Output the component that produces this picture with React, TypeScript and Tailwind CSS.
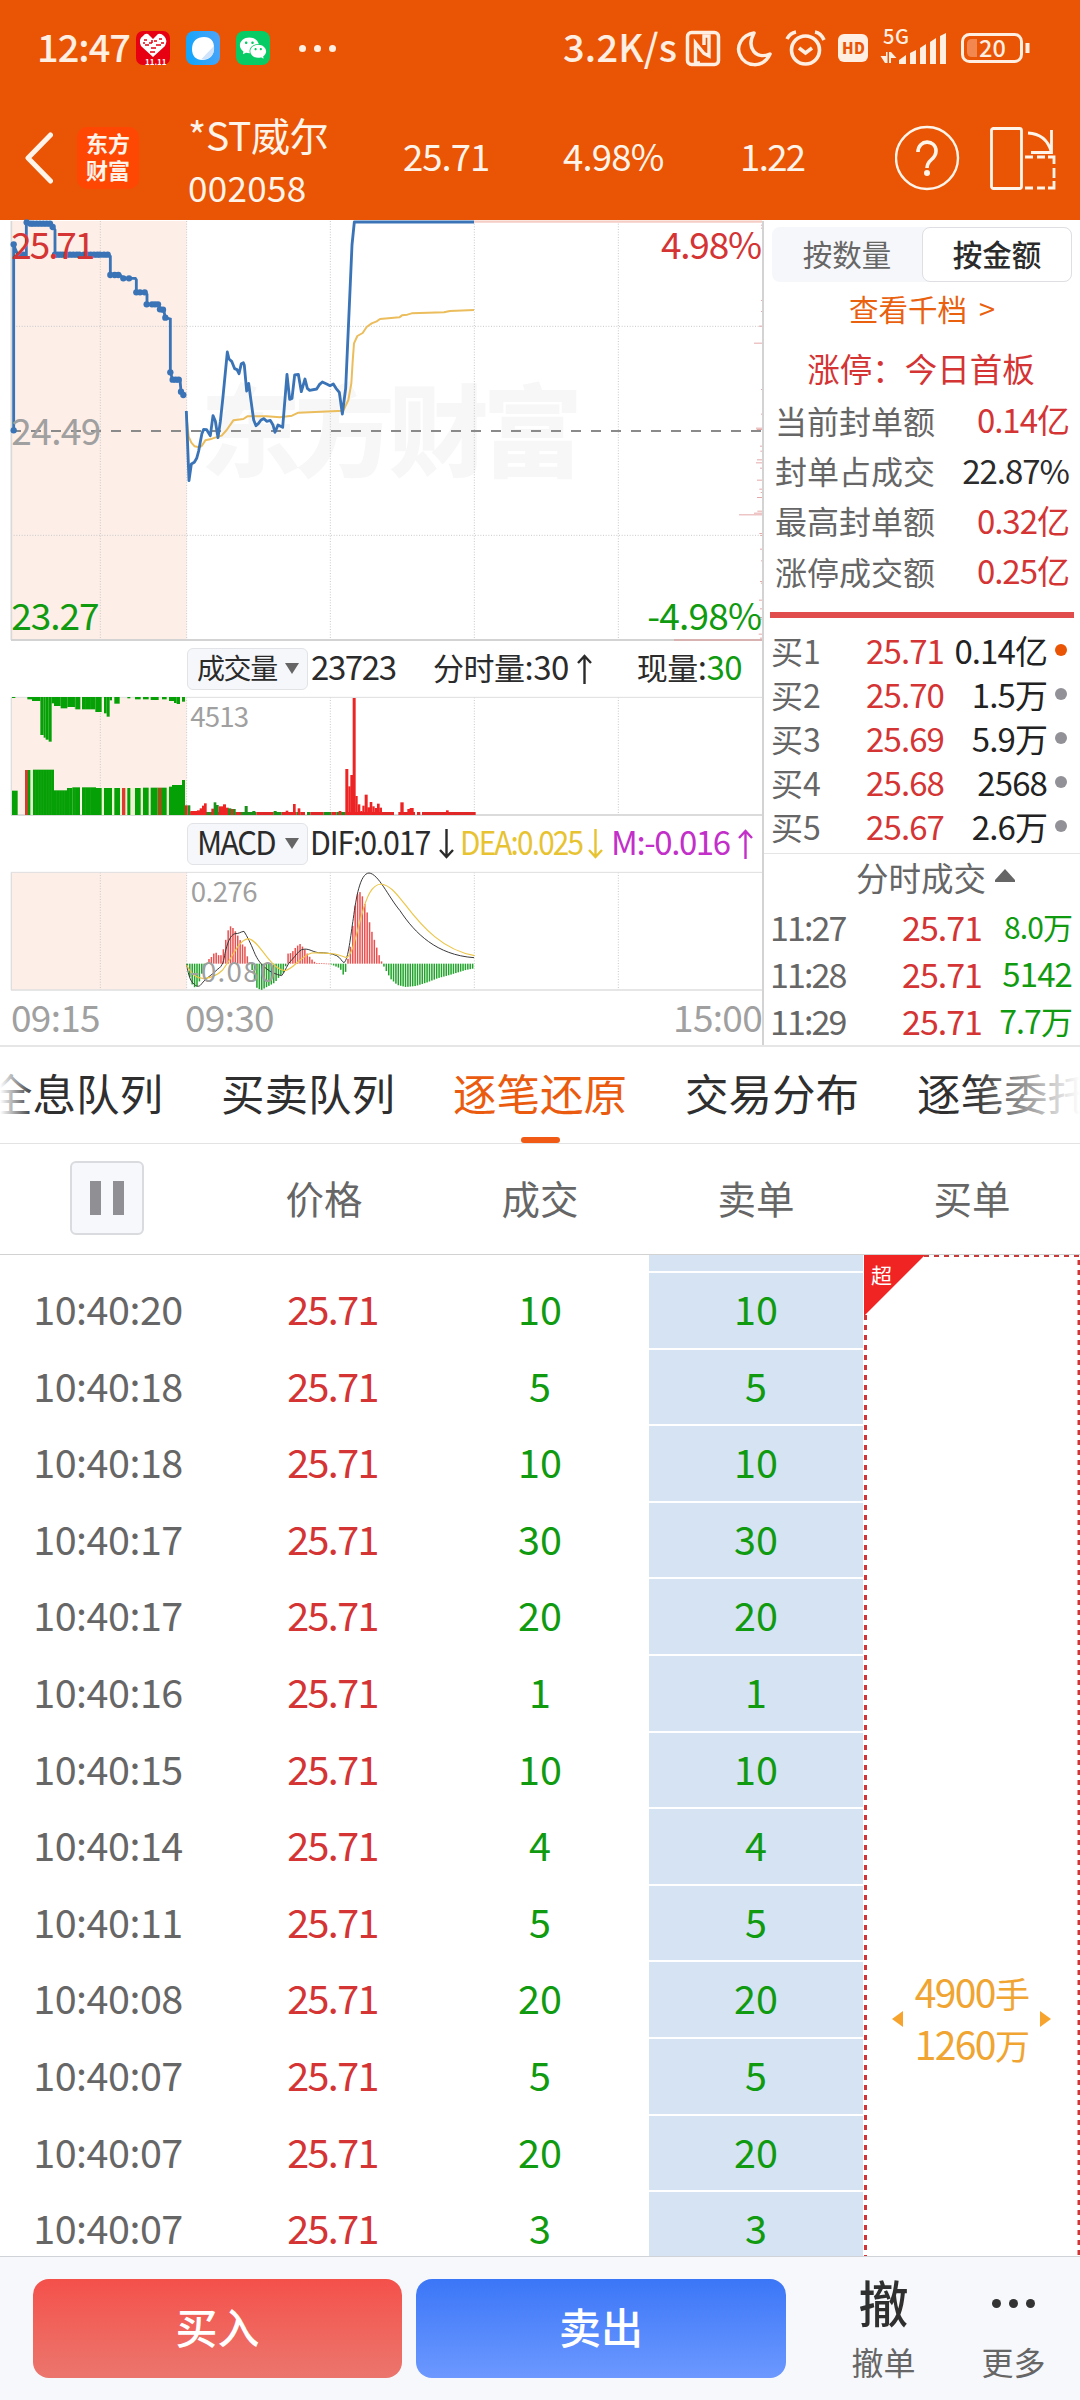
import { AiFillWechat } from 'react-icons/ai';

const hours = ['09:15', '09:30', '15:00'];

const sealStats = [
  { label: '当前封单额', value: '0.14亿', color: 'text-[#d43434]' },
  { label: '封单占成交', value: '22.87%', color: 'text-[#2b2b2b]' },
  { label: '最高封单额', value: '0.32亿', color: 'text-[#d43434]' },
  { label: '涨停成交额', value: '0.25亿', color: 'text-[#d43434]' },
];

const bids = [
  { label: '买1', price: '25.71', volume: '0.14亿', dot: 'bg-[#e95504]' },
  { label: '买2', price: '25.70', volume: '1.5万', dot: 'bg-[#929197]' },
  { label: '买3', price: '25.69', volume: '5.9万', dot: 'bg-[#929197]' },
  { label: '买4', price: '25.68', volume: '2568', dot: 'bg-[#929197]' },
  { label: '买5', price: '25.67', volume: '2.6万', dot: 'bg-[#929197]' },
];

const minuteTrades = [
  { time: '11:27', price: '25.71', volume: '8.0万', size: 'text-[30px]' },
  { time: '11:28', price: '25.71', volume: '5142', size: 'text-[33px]' },
  { time: '11:29', price: '25.71', volume: '7.7万', size: 'text-[32px]' },
];

const tabs = ['全息队列', '买卖队列', '逐笔还原', '交易分布', '逐笔委托'];

const ticks = [
  { time: '10:40:20', volume: 10 },
  { time: '10:40:18', volume: 5 },
  { time: '10:40:18', volume: 10 },
  { time: '10:40:17', volume: 30 },
  { time: '10:40:17', volume: 20 },
  { time: '10:40:16', volume: 1 },
  { time: '10:40:15', volume: 10 },
  { time: '10:40:14', volume: 4 },
  { time: '10:40:11', volume: 5 },
  { time: '10:40:08', volume: 20 },
  { time: '10:40:07', volume: 5 },
  { time: '10:40:07', volume: 20 },
  { time: '10:40:07', volume: 3 },
];

// The charts use a unit of a third of a pixel, so all of them are 2289 wide.
const gridX = [301, 560, 991, 1423, 1855];

const auctionLine =
  'M41 648V88L45 100L53 119H79V25H150L158 36L165 45V119H326L331 124V180H360L370 190H406L409 195V232H434L441 238V268H474L482 283L492 290L496 308L511 312V472L518 494H540L543 530L550 540';
const auctionDots = [
  [41, 88], [41, 646], [60, 119], [70, 119], [80, 22], [92, 26], [100, 26], [110, 26], [120, 26], [130, 26], [140, 26], [150, 26], [158, 36],
  [165, 119], [173, 119], [181, 119], [189, 119], [200, 119], [210, 119], [220, 119], [230, 119], [238, 119], [252, 119],
  [262, 119], [272, 119], [282, 119], [292, 119], [300, 119], [312, 119], [323, 119], [331, 180], [344, 180], [355, 180],
  [370, 190], [387, 190], [409, 232], [420, 232], [434, 232], [440, 268], [456, 268], [465, 268], [474, 268], [480, 283],
  [489, 284], [496, 308], [511, 472], [518, 494], [527, 494], [536, 494], [543, 530], [550, 540],
];
const priceLine =
  'M559 588L567 797L574 747L583 742L590 730L596 708L601 680L606 655L611 643L620 644L631 662L639 602L646 618L654 668L661 620L669 545L682 411L687 432L695 439L704 461L711 464L717 476L724 446L730 443L733 451L740 528L746 505L752 550L761 615L768 632L775 626L783 615L792 611L800 619L811 616L819 630L825 652L834 630L848 637L861 478L869 553L876 550L884 480L895 478L904 530L915 492L922 520L929 526L950 522L958 509L967 501L980 507L990 512L1000 507L1008 520L1018 532L1027 597L1037 520L1049 250L1056 90L1063 21H1422';
const averageLine =
  'M559 600L566 665L574 683L584 694L597 697L605 693L616 676L630 673L645 668L665 662L680 645L700 616L730 612L742 604L800 604L840 607L876 602L895 593L1030 587L1045 555L1054 505L1058 440L1062 385L1072 363L1088 354L1100 336L1115 325L1130 319L1140 312L1198 307L1206 301L1222 299L1235 295L1332 292L1350 288L1422 285';

// y, length of the volume-by-price ticks on the right edge
const priceTicks = [
  [31, 3], [40, 3], [257, 3], [290, 3], [334, 9], [385, 24], [524, 3], [598, 3], [640, 18], [644, 16], [694, 6], [709, 5], [735, 15],
  [744, 18], [760, 6], [796, 15], [823, 8], [833, 4], [848, 15], [889, 14], [895, 24], [900, 69], [956, 8], [962, 5],
  [1003, 6], [1038, 3], [1100, 6], [1105, 3], [1156, 9], [1182, 6], [1208, 8], [1213, 4], [1258, 10], [1270, 6],
];

// x, width, top
const auctionBars = [
  [36, 17, 467], [84, 7, 405], [99, 63, 404], [162, 39, 466], [201, 16, 459], [217, 23, 457], [246, 42, 457], [288, 17, 459],
  [312, 24, 459], [343, 17, 459], [382, 9, 459], [405, 17, 459], [429, 17, 458], [452, 21, 458], [486, 14, 458],
  [507, 9, 455], [516, 30, 450], [546, 9, 435],
];
// x, width, bottom
const hangingBars = [
  [36, 10, 189], [82, 14, 193], [96, 25, 198], [121, 10, 300], [131, 6, 308], [137, 9, 314], [146, 9, 320], [155, 7, 205],
  [162, 20, 213], [182, 20, 220], [202, 24, 216], [226, 15, 223], [246, 40, 223], [286, 19, 231], [312, 8, 235], [320, 9, 245],
  [329, 7, 196], [343, 16, 206], [382, 9, 190], [405, 17, 193], [429, 17, 193], [452, 24, 195], [486, 14, 193], [507, 15, 198], [522, 8, 204],
  [530, 10, 207], [546, 9, 200],
];
// x, width, top, 1 = up
const volumeBars = [
  [555, 8, 511, 1], [563, 8, 511, 0], [571, 20, 528, 1], [591, 10, 526, 1], [599, 9, 520, 1], [606, 7, 512, 1], [612, 8, 505, 1],
  [634, 8, 521, 1], [641, 8, 502, 0], [648, 8, 510, 0], [656, 14, 514, 1], [669, 9, 508, 1], [677, 9, 518, 1], [684, 10, 520, 0], [693, 7, 522, 1], [699, 8, 522, 0],
  [734, 9, 513, 0], [757, 9, 528, 0], [821, 9, 528, 0], [857, 8, 527, 1], [879, 8, 507, 1], [893, 8, 520, 1],
  [1016, 8, 528, 1], [1036, 9, 402, 1], [1045, 7, 454, 1], [1051, 8, 420, 1], [1058, 9, 189, 1], [1066, 7, 483, 1], [1073, 8, 508, 1], [1081, 6, 528, 1],
  [1087, 7, 512, 1], [1094, 9, 479, 1], [1102, 8, 517, 1], [1109, 8, 501, 1], [1117, 7, 514, 1], [1124, 8, 519, 1], [1131, 8, 506, 1], [1138, 8, 518, 1],
  [1201, 10, 502, 1], [1222, 9, 522, 1], [1229, 12, 519, 1], [1338, 8, 526, 1],
];
const volumeFloor = [
  [571, 46, 1], [617, 16, 0], [633, 36, 1], [669, 38, 0], [707, 16, 1], [723, 46, 0], [769, 52, 1], [821, 24, 0], [845, 44, 1], [889, 12, 0],
  [901, 14, 1], [921, 10, 0], [931, 40, 1], [971, 23, 0], [994, 15, 1], [1009, 27, 0], [1036, 146, 1], [1195, 50, 1], [1251, 10, 1], [1266, 161, 1],
];

// x, y of the MACD histogram outline, zero is at 986
const macdOutline = [
  [560, 992], [568, 1030], [575, 1050], [583, 1058], [592, 1052], [605, 1010], [615, 998], [620, 976], [632, 966], [643, 950],
  [655, 962], [663, 960], [672, 928], [681, 888], [690, 873], [700, 882], [710, 900], [725, 928], [733, 935], [740, 965],
  [746, 984], [752, 996], [760, 1030], [769, 1060], [782, 1065], [800, 1055], [822, 1043], [840, 1020], [853, 1008], [856, 984], [860, 956],
  [872, 954], [885, 937], [897, 926], [910, 940], [922, 960], [935, 975], [945, 984], [985, 986], [1000, 992], [1018, 1000],
  [1028, 1020], [1035, 1010], [1040, 980], [1050, 930], [1058, 855], [1066, 790], [1074, 768], [1082, 775], [1090, 800],
  [1100, 835], [1112, 885], [1124, 925], [1135, 960], [1145, 986], [1155, 1005], [1170, 1032], [1190, 1050], [1215, 1056],
  [1245, 1053], [1280, 1042], [1310, 1030], [1350, 1019], [1395, 1005], [1426, 999],
];

const macdBars = Array.from({ length: 120 }, (_, i) => {
  const x = 560 + i * 7.19;
  const next = Math.max(1, macdOutline.findIndex((p) => p[0] > x));
  const [x0, y0] = macdOutline[next - 1];
  const [x1, y1] = macdOutline[next];
  return { x, y: y0 + ((y1 - y0) * (x - x0)) / (x1 - x0) };
});

function Grid({ top, bottom }: { top: number; bottom: number }) {
  return (
    <g stroke="#c9c9c9" strokeWidth="3" strokeDasharray="3 5">
      {gridX.map((x) => (
        <line key={x} x1={x} x2={x} y1={top} y2={bottom} />
      ))}
    </g>
  );
}

function PriceChart() {
  return (
    <svg className="block h-[421px] w-[763px] overflow-visible" viewBox="0 15 2289 1263" fontSize="111">
      <rect x="33" y="18" width="527" height="1255" fill="#fdeee7" />
      <text x="602" y="763" fontSize="300" fontWeight="900" fill="#f7f7f7" textLength="1146">东方财富</text>
      <Grid top={18} bottom={1272} />
      <path d="M33 334H2286M33 961H2286" stroke="#c9c9c9" strokeWidth="3" strokeDasharray="3 5" />
      <path d="M34 18V1275" stroke="#d9d9d9" strokeWidth="5" />
      <path d="M33 1275H2286" stroke="#d3d3d3" strokeWidth="6" />
      <path d="M2022 1275H2286" stroke="#d8b1b1" strokeWidth="6" />
      <path d="M1422 20H2286" stroke="#f6cdc4" strokeWidth="7" />
      <path d="M33 648H2286" stroke="#8a8a8a" strokeWidth="6" strokeDasharray="30 30" />
      {priceTicks.map(([y, w]) => (
        <rect key={y} x={2286 - w} y={y - 2} width={w} height="3" fill="#e5a9a9" />
      ))}
      <path d={averageLine} fill="none" stroke="#ebbd5c" strokeWidth="6" strokeLinejoin="round" />
      <path d={priceLine} fill="none" stroke="#3a74b7" strokeWidth="8.5" strokeLinejoin="round" />
      <path d={auctionLine} fill="none" stroke="#3a74b7" strokeWidth="8.5" />
      {auctionDots.map(([x, y]) => (
        <circle key={x + '-' + y} cx={x} cy={y} r="9.5" fill="#3a74b7" />
      ))}
      <text x="34" y="132" fill="#d43434" textLength="252">25.71</text>
      <text x="34" y="690" fill="#a0a0a0" textLength="270">24.49</text>
      <text x="34" y="1245" fill="#109a10" textLength="265">23.27</text>
      <text x="1983" y="132" fill="#d43434" textLength="303">4.98%</text>
      <text x="1942" y="1245" fill="#109a10" textLength="344">-4.98%</text>
    </svg>
  );
}

function VolumeChart() {
  return (
    <svg className="block h-[120px] w-[763px]" viewBox="0 183 2289 360">
      <rect x="33" y="187" width="527" height="352" fill="#fdeee7" />
      <Grid top={187} bottom={540} />
      <path d="M33 187H2286" stroke="#dedede" strokeWidth="3" />
      <path d="M33 540H2286" stroke="#cfcfcf" strokeWidth="4" />
      <path d="M34 187V540" stroke="#dedede" strokeWidth="4" />
      <rect x="91" y="406" width="8" height="134" fill="#e2f0cf" />
      <rect x="300" y="460" width="246" height="80" fill="#eef0d2" />
      {auctionBars.map(([x, w, top]) => (
        <rect key={x} x={x} y={top} width={w} height={540 - top} fill="#05a005" />
      ))}
      {hangingBars.map(([x, w, bottom]) => (
        <rect key={x} x={x} y="186" width={w} height={bottom - 186} fill="#05a005" />
      ))}
      <path d="M107 406V540M115 406V540M123 406V540M131 406V540M139 406V540M147 406V540M155 406V540M170 468V540M178 468V540M186 468V540M194 468V540M209 460V540M225 460V540M256 460V540M272 460V540M225 188V222M256 188V222M272 188V222" stroke="#33b033" strokeWidth="1" />
      <rect x="75" y="405" width="9" height="135" fill="#c9432c" />
      <rect x="366" y="459" width="10" height="81" fill="#e03a30" />
      <rect x="473" y="458" width="13" height="82" fill="#8f5a14" />
      {volumeFloor.map(([x, w, up]) => (
        <rect key={x} x={x} y="531" width={w} height="9" fill={up ? '#e02727' : '#1a8f1a'} />
      ))}
      {volumeBars.map(([x, w, top, up]) => (
        <rect key={x} x={x} y={top} width={w} height={540 - top} fill={up ? '#ee2424' : '#1a8f1a'} />
      ))}
      <text x="571" y="276" fontSize="83" fill="#a0a0a0" textLength="176">4513</text>
    </svg>
  );
}

function MacdChart() {
  return (
    <svg className="block h-[120px] w-[763px]" viewBox="0 708 2289 360">
      <rect x="33" y="712" width="527" height="352" fill="#fdeee7" />
      <Grid top={712} bottom={1065} />
      <path d="M33 712H2286" stroke="#dedede" strokeWidth="3" />
      <path d="M33 1065H2286" stroke="#dedede" strokeWidth="5" />
      <path d="M34 712V1065" stroke="#dedede" strokeWidth="4" />
      {macdBars.map(({ x, y }) => (
        <rect
          key={x}
          x={x}
          y={Math.min(y, 986)}
          width="4.5"
          height={Math.max(2, Math.abs(y - 986))}
          fill={y < 986 ? '#e95050' : '#20a32a'}
        />
      ))}
      <path
        d="M560 988C566 1025 572 1040 583 1048C592 1058 600 1054 606 1045C622 1025 640 1018 652 1003C668 995 672 975 675 955C682 925 690 900 705 896C716 897 722 890 732 889C742 905 752 925 762 950C772 975 785 990 798 1000C812 1012 828 1018 845 1022C856 1010 862 985 875 975C888 962 893 950 905 944C925 938 935 950 955 953C975 953 995 955 1010 962C1022 968 1025 980 1032 983C1045 975 1052 900 1060 850C1068 790 1080 715 1107 714C1135 716 1165 785 1200 827C1245 895 1310 960 1422 968"
        fill="none"
        stroke="#3a3a3a"
        strokeWidth="3"
      />
      <path
        d="M560 990C575 1020 590 1030 612 1031C640 1027 655 1018 668 1005C690 975 700 955 712 937C725 918 735 912 746 911C765 915 780 940 800 965C820 990 835 1005 855 1007C880 1003 900 965 935 954C965 953 985 955 1005 957C1020 960 1030 965 1040 968C1060 955 1070 890 1085 840C1100 785 1115 748 1144 747C1175 752 1195 785 1215 808C1270 880 1330 945 1424 962"
        fill="none"
        stroke="#ecc64a"
        strokeWidth="3.5"
      />
      <text x="572" y="800" fontSize="83" fill="#a0a0a0" textLength="201">0.276</text>
      <text x="570" y="1041" fontSize="83" fill="#a0a0a0" textLength="256">-0.080</text>
    </svg>
  );
}

function IndicatorSelect({ label }: { label: string }) {
  return (
    <div className="ml-[187px] flex h-[42px] w-[121px] shrink-0 items-center justify-between rounded-md border border-[#e2e3e6] bg-[#f6f7fa] pr-2 pl-[9px] whitespace-nowrap text-[#2b2b2b]">
      <span className={label === 'MACD' ? 'mb-1 w-[79px] origin-left scale-x-[0.94] text-[33px] tracking-[-1.9px]' : 'mb-1 w-[79px] text-[28px] tracking-[-1.4px]'}>{label}</span>
      <svg className="h-[11px] w-[14px] shrink-0" viewBox="0 0 14 11" fill="#666">
        <path d="M0 0H14L7 11Z" />
      </svg>
    </div>
  );
}

function Arrow({ down = false }: { down?: boolean }) {
  return (
    <svg
      className={down ? 'h-[30px] w-[15px] shrink-0 rotate-180' : 'h-[30px] w-[15px] shrink-0'}
      viewBox="0 0 15 30"
      fill="none"
      stroke="currentColor"
      strokeWidth="2.4"
    >
      <path d="M7.500 30V2M1 9L7.500 2L14 9" />
    </svg>
  );
}

function StatusBar() {
  return (
    <div className="flex h-24 items-center pl-[37px] text-[#ffeee2]">
      <span className="mb-1 w-[99px] text-[38px] leading-none font-medium tracking-[-1px]">12:47</span>
      <svg className="h-[34px] w-[34px]" viewBox="0 0 34 34">
        <rect width="34" height="34" rx="7" fill="#e60012" />
        <path d="M17 26L5 15Q2 8 7 5Q9 2 12 3L17 8L22 3Q25 2 28 5Q32 9 29 15Z" fill="#fff" />
        <path d="M8 9h3M13 12h3M9 14h4M18 10h3M23 8h3M20 14h5M15 17h5M14 21h5M7 12h2M25 12h3M16 9v3" stroke="#e60012" strokeWidth="1.500" />
        <text x="9" y="33.500" fontSize="8" fontWeight="700" fill="#fff">11.11</text>
      </svg>
      <svg className="ml-4 h-[34px] w-[34px]" viewBox="0 0 34 34">
        <defs>
          <linearGradient id="browser" x1="0" y1="0.500" x2="1" y2="0.300">
            <stop offset="0" stopColor="#12a5fc" />
            <stop offset="1" stopColor="#4ba4f8" />
          </linearGradient>
        </defs>
        <rect width="34" height="34" rx="8" fill="url(#browser)" />
        <path d="M6 18C6 10 11 6 18 6C25 6 28 10 28 17C28 25 23 29 16 29C10 29 6 25 6 18Z" fill="#fff" />
        <path d="M28 15C29 24 24 29 15 28.500Z" fill="#cfe3fb" />
      </svg>
      <div className="ml-4 flex h-[34px] w-[34px] items-center justify-center rounded-lg bg-[#07cb64]">
        <AiFillWechat className="h-[30px] w-[30px] text-white" />
      </div>
      <div className="ml-[29px] flex gap-2">
        <i className="h-[7px] w-[7px] rounded-full bg-[#ffeee2]" />
        <i className="h-[7px] w-[7px] rounded-full bg-[#ffeee2]" />
        <i className="h-[7px] w-[7px] rounded-full bg-[#ffeee2]" />
      </div>
      <span className="mb-1 ml-[227px] w-[123px] text-[38px] leading-none font-medium tracking-[0.2px]">3.2K/s</span>
      <svg className="h-[38px] w-[345px] overflow-visible" viewBox="686 29 345 38" fill="none" stroke="#ffeee2">
        {/* NFC */}
        <rect x="687.500" y="32.500" width="31" height="32" rx="4" strokeWidth="3.500" />
        <path d="M700 63H695.500V43L704 53.500L709 56V36H704V45" strokeWidth="3.400" />
        {/* do not disturb */}
        <path d="M754 33C741 35 736 47 740 55C745 67 763 69 770 54C756 60 746 48 754 33Z" strokeWidth="3.500" strokeLinejoin="round" />
        {/* alarm */}
        <circle cx="805.500" cy="50" r="14" strokeWidth="3.600" />
        <path d="M799 48L805.500 53L812 48M787 39Q790 33 796 32M815 32Q821 33 824 40" strokeWidth="3.600" />
        <rect x="838" y="34" width="30" height="28" rx="6" fill="#ffeee2" stroke="none" />
        <text x="842" y="54" fontSize="15" fontWeight="900" fill="#e95504" stroke="none" textLength="23">HD</text>
        <text x="883" y="44" fontSize="20" fontWeight="500" fill="#ffeee2" stroke="none" textLength="26">5G</text>
        <path d="M880.500 56H886V52H887.500V63H885ZM889 63V52H891L896.500 58H891V63Z" fill="#ffeee2" stroke="none" />
        <path d="M899 64V60L906 55V64ZM910 64V53L916 50V64ZM920 64V48L926 44V64ZM930 64V42L936 38V64ZM940 64V36L946 33V64Z" fill="#ffeee2" stroke="none" />
        <rect x="962.500" y="34.500" width="59" height="27" rx="7" strokeWidth="3" />
        <path d="M977 39V57H972Q967 57 967 52V44Q967 39 972 39Z" fill="#f28750" stroke="none" />
        <path d="M1027.500 43V53" strokeWidth="4" />
        <text x="979" y="56.500" fontSize="23.500" fontWeight="500" fill="#ffeee2" stroke="none" textLength="27">20</text>
      </svg>
    </div>
  );
}

function QuoteHeader() {
  return (
    <div className="flex h-[124px] items-center pl-[25px] text-[#fff4ea]">
      <svg className="h-[52px] w-7" viewBox="0 0 28 52" fill="none" stroke="#fff4ea" strokeWidth="5" strokeLinecap="round" strokeLinejoin="round">
        <path d="M25.500 3L3 26L25.500 49" />
      </svg>
      <div className="ml-6 flex h-[62px] w-[62px] flex-col items-center rounded-[10px] bg-[#ff4704] pt-[2px] text-[22px] leading-[27px] font-bold">
        <span>东方</span>
        <span>财富</span>
      </div>
      <div className="ml-[49px] h-[124px] w-[215px] pt-3">
        <div className="text-[39px] leading-[52px] tracking-[-0.3px]">*ST威尔</div>
        <div className="text-[35px] leading-[54px] tracking-[0.3px]">002058</div>
      </div>
      <span className="mb-1 w-40 text-[36.500px] leading-none tracking-[-1px]">25.71</span>
      <span className="mb-1 w-[177px] text-[36.500px] leading-none tracking-[-0.8px]">4.98%</span>
      <span className="mb-1 w-[155px] text-[36.500px] leading-none tracking-[-1.600px]">1.22</span>
      <svg className="h-[66px] w-[66px]" viewBox="0 0 66 66" fill="none" stroke="#fff4ea" strokeWidth="2.400">
        <circle cx="32" cy="33" r="31" />
        <path d="M23 27C23 14 41 14 41 26C41 35 32 34 32 43" strokeWidth="3.600" />
        <circle cx="32" cy="48" r="3" fill="#fff4ea" stroke="none" />
      </svg>
      <svg className="ml-[29px] h-16 w-[67px]" viewBox="0 0 67 64" fill="none" stroke="#fff4ea" strokeWidth="2.800">
        <rect x="1.500" y="2.500" width="30" height="60" rx="2" />
        <path d="M38 7Q56 8 61 25M61.500 4V26.500H41" />
        <path d="M35 31H43M47 31H55M58 31H64V38M64 42V52M64 55V62H58M55 62H47M43 62H35" />
      </svg>
    </div>
  );
}

function OrderBook() {
  return (
    <div className="h-[826px] w-[316px] text-[#666]">
      <div className="mx-2 mt-[6px] flex h-[55px] rounded-lg bg-[#f6f7fa] text-[29.500px]">
        <div className="flex w-[150px] items-center justify-center pb-[3px]">按数量</div>
        <div className="flex w-[150px] items-center justify-center rounded-lg border border-[#dedfe3] bg-white pb-[3px] font-medium text-[#2b2b2b]">
          按金额
        </div>
      </div>
      <div className="flex h-[52px] items-center justify-center text-[29.500px] text-[#e9600f]">
        查看千档<span className="ml-[12px] text-[29px]">&gt;</span>
      </div>
      <div className="flex h-[58px] items-end justify-center pr-[2px] text-[32.500px] leading-[48px] text-[#d43434]">涨停：今日首板</div>
      <div className="mt-[3px] mb-[2px]">
        {sealStats.map((stat) => (
          <div key={stat.label} className="flex h-[50.2px] items-center justify-between pr-[11px] pl-[11px]">
            <span className="text-[32px]">{stat.label}</span>
            <span className={`text-[33px] tracking-[-1px] ${stat.color}`}>{stat.value}</span>
          </div>
        ))}
      </div>
      <div className="mt-4 ml-[6px] h-[6px] w-[304px] bg-[#e14c4c]" />
      <div className="mt-[10px] h-[225px]">
        {bids.map((bid) => (
          <div key={bid.label} className="flex h-11 items-center pl-[7px] text-[33px] leading-[44px]">
            <span className="w-[60px] text-[32px]">{bid.label}</span>
            <span className="w-[113px] text-right tracking-[-0.900px] text-[#d43434]">{bid.price}</span>
            <span className="w-[103px] text-right tracking-[-0.900px] whitespace-nowrap text-[#222]">{bid.volume}</span>
            <i className={`ml-2 h-3 w-3 rounded-full ${bid.dot}`} />
          </div>
        ))}
      </div>
      <div className="flex h-[50px] items-center justify-center gap-[9px] border-t border-[#e5e5e5] pb-[2px] pl-[27px] text-[32.500px]">
        分时成交
        <svg className="mb-1 h-[13px] w-5" viewBox="0 0 20 13" fill="#666">
          <path d="M10 0L20 11V13H0V11Z" />
        </svg>
      </div>
      {minuteTrades.map((trade) => (
        <div key={trade.time} className="flex h-[47px] items-center pl-[6px]">
          <span className="w-[84px] text-[34px] tracking-[-1.900px]">{trade.time}</span>
          <span className="w-[128px] text-right text-[34px] tracking-[-1px] text-[#d43434]">{trade.price}</span>
          <span className={`w-[90px] text-right tracking-[-0.900px] text-[#109a10] ${trade.size}`}>{trade.volume}</span>
        </div>
      ))}
    </div>
  );
}

function MarketPanel() {
  return (
    <section className="flex h-[827px] border-b-2 border-[#e6e6e6] pt-px">
      <div className="w-[764px] border-r-2 border-[#d3d3d3]">
        <div className="-mt-px">
          <PriceChart />
        </div>
        <div className="flex h-[55px] items-center text-[31px] leading-none text-[#2b2b2b]">
          <IndicatorSelect label="成交量" />
          <span className="mb-1 ml-[3px] w-[122px] text-[33px] tracking-[-1.400px]">23723</span>
          <span className="mb-1 whitespace-nowrap tracking-[-0.500px]">
            分时量<span className="text-[33px]">:30</span>
          </span>
          <span className="ml-2">
            <Arrow />
          </span>
          <span className="mb-1 ml-[45px] whitespace-nowrap tracking-[-0.500px]">
            现量<span className="text-[33px]">:</span>
            <span className="text-[33px] text-[#109a10]">30</span>
          </span>
        </div>
        <VolumeChart />
        <div className="flex h-[55px] items-center text-[33px] leading-none whitespace-nowrap text-[#2b2b2b]">
          <IndicatorSelect label="MACD" />
          <span className="mb-1 ml-[2px] w-[129px] origin-left scale-x-[0.92] tracking-[-1.300px]">DIF:0.017</span>
          <Arrow down />
          <span className="ml-[6px] flex items-center text-[#e8c331]">
            <span className="mb-1 w-[128px] origin-left scale-x-90 tracking-[-2px]">DEA:0.025</span>
            <Arrow down />
          </span>
          <span className="ml-[8px] flex items-center text-[#c22fc9]">
            <span className="mb-1 w-[127px] tracking-[-1.400px]">M:-0.016</span>
            <Arrow />
          </span>
        </div>
        <MacdChart />
        <div className="flex h-[54px] items-center pb-1 pl-[11px] text-[37px] leading-none tracking-[-0.700px] text-[#a0a0a0]">
          <span className="w-[174px]">{hours[0]}</span>
          <span>{hours[1]}</span>
          <span className="ml-auto">{hours[2]}</span>
        </div>
      </div>
      <OrderBook />
    </section>
  );
}

function TickTable() {
  return (
    <section>
      <div className="grid h-[111px] grid-cols-5 items-center border-b border-[#d2d2d2] text-center text-[38.500px] leading-none text-[#666]">
        <div className="flex pl-[70px]">
          <div className="mb-[3px] flex h-[74px] w-[74px] items-center justify-center gap-3 rounded-md border-2 border-[#d9dbdf] bg-[#f7f8fb]">
            <i className="h-[34px] w-[11px] bg-[#908f94]" />
            <i className="h-[34px] w-[11px] bg-[#908f94]" />
          </div>
        </div>
        <div className="pb-1">价格</div>
        <div className="pb-1">成交</div>
        <div className="pb-1">卖单</div>
        <div className="pb-1">买单</div>
      </div>
      <div className="flex h-[1001px] overflow-hidden text-[39.500px] leading-none">
        <div className="w-[863px]">
          <div className="ml-[649px] h-4 w-[214px] bg-[#d6e3f2]" />
          {ticks.map((tick, i) => (
            <div key={i} className="flex h-[76.600px] text-center">
              <div className="flex w-[216px] items-center justify-center pb-[3px] tracking-[-0.500px] text-[#666]">{tick.time}</div>
              <div className="flex w-[233px] items-center justify-center pb-[3px] tracking-[-1.600px] text-[#d43434]">25.71</div>
              <div className="flex w-[182px] items-center justify-center pb-[3px] text-[#109a10]">{tick.volume}</div>
              <div className="mt-[2px] ml-[18px] flex w-[214px] items-center justify-center bg-[#d6e3f2] pb-[5px] text-[#109a10]">{tick.volume}</div>
            </div>
          ))}
        </div>
        <div className="relative w-[217px]">
          <svg className="absolute top-0 left-0 h-[1001px] w-[217px]" viewBox="0 0 217 1001">
            <path d="M1 1H217" stroke="#c93a3a" strokeWidth="2" strokeDasharray="5 5" />
            <path d="M2.500 0V1001M216 5V1001" stroke="#d43434" strokeWidth="3" strokeDasharray="5 5" />
            <path d="M1 0H62L1 61Z" fill="#f12424" />
          </svg>
          <span className="absolute top-[9px] left-[8px] text-[21px] text-white">超</span>
          <div className="mt-[711px] flex items-center justify-center gap-[12px] text-[#f0a431]">
            <svg className="h-4 w-[11px]" viewBox="0 0 11 16" fill="#f6a42d">
              <path d="M11 0V16L0 8Z" />
            </svg>
            <div className="pb-[2px] text-[39px] leading-[51px] tracking-[-1.600px] whitespace-nowrap">
              <div>4900<span className="text-[35px]">手</span></div>
              <div>1260<span className="text-[35px]">万</span></div>
            </div>
            <svg className="h-4 w-[11px]" viewBox="0 0 11 16" fill="#f6a42d">
              <path d="M0 0V16L11 8Z" />
            </svg>
          </div>
        </div>
      </div>
    </section>
  );
}

export default function App() {
  return (
    <div className="h-[2400px] w-[1080px] overflow-hidden bg-white font-['Noto_Sans_CJK_SC',sans-serif]">
      {/* Header */}
      <header className="h-[220px] bg-[#e95504]">
        <StatusBar />
        <QuoteHeader />
      </header>

      <MarketPanel />

      {/* Tabs */}
      <nav className="relative flex h-[97px] justify-center gap-[58px] overflow-hidden border-b border-[#e3e3e3] text-[43.500px] leading-[91px] whitespace-nowrap text-[#2f2f2f]">
        {tabs.map((tab) => (
          <div key={tab} className={tab === '逐笔还原' ? 'text-[#ea5b10]' : ''}>
            {tab}
          </div>
        ))}
        <i className="absolute bottom-0 left-[521px] h-[6px] w-[39px] rounded-full bg-[#f05a14]" />
        <div className="absolute inset-y-0 left-0 w-[34px] bg-gradient-to-r from-white to-transparent" />
        <div className="absolute inset-y-0 right-0 w-[110px] bg-gradient-to-l from-white to-transparent" />
      </nav>

      <TickTable />

      {/* Bottom bar */}
      <footer className="flex h-[144px] border-t border-[#d0d4d8] bg-[#f7f8fb] pt-[22px] pl-[33px]">
        <button className="h-[99px] w-[369px] rounded-2xl bg-gradient-to-b from-[#f4504a] to-[#eb756d] pb-[5px] text-[42px] leading-none font-medium text-white">
          买入
        </button>
        <button className="ml-[14px] h-[99px] w-[370px] rounded-2xl bg-gradient-to-b from-[#3b76f7] to-[#6c98ff] pb-[5px] text-[42px] leading-none font-medium text-white">
          卖出
        </button>
        <div className="ml-[65px] w-[65px] text-center text-[32px] text-[#666]">
          <div className="text-[50px] leading-[44px] font-medium text-[#2f2f2f]">撤</div>
          <div className="mt-[16px] leading-[44px]">撤单</div>
        </div>
        <div className="ml-[65px] w-[65px] text-center text-[32px] text-[#666]">
          <div className="flex h-[48px] items-center justify-center gap-2">
            <i className="h-[9px] w-[9px] rounded-full bg-[#333]" />
            <i className="h-[9px] w-[9px] rounded-full bg-[#333]" />
            <i className="h-[9px] w-[9px] rounded-full bg-[#333]" />
          </div>
          <div className="mt-[12px] leading-[44px]">更多</div>
        </div>
      </footer>
    </div>
  );
}
